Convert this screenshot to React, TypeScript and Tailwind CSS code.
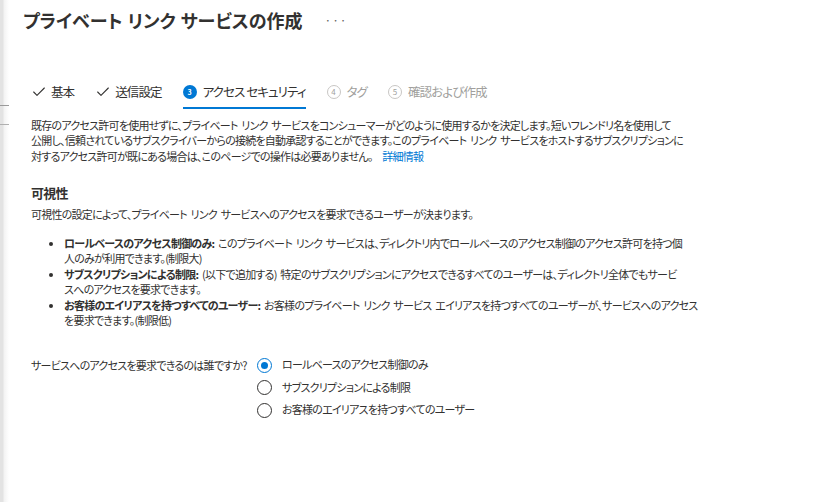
import { Check } from "lucide-react";

const font = "font-['Noto_Sans_CJK_JP','Noto_Sans',sans-serif] [font-feature-settings:'palt']";

function StepDone({ label }: { label: string }) {
  return (
    <div className="flex items-center gap-[4px] pb-[7px] pt-[2px] text-[#323130]">
      <Check size={16} strokeWidth={1.6} className="text-[#323130]" />
      <span>{label}</span>
    </div>
  );
}

function StepTodo({ n, label }: { n: number; label: string }) {
  return (
    <div className="flex items-center gap-[6px] pb-[7px] pt-[2px] text-[#a19f9d]">
      <span className="flex h-[14px] w-[14px] items-center justify-center rounded-full border border-[#c8c6c4] text-[8px] leading-none tracking-normal">
        {n}
      </span>
      <span>{label}</span>
    </div>
  );
}

function Radio({ label, checked }: { label: string; checked?: boolean }) {
  return (
    <label className="flex h-[22.5px] items-center gap-[10px]">
      <span
        className={
          checked
            ? "flex h-[15px] w-[15px] items-center justify-center rounded-full border border-[#0078d4]"
            : "flex h-[15px] w-[15px] items-center justify-center rounded-full border border-[#323130]"
        }
      >
        {checked && <span className="h-[7px] w-[7px] rounded-full bg-[#0078d4]" />}
      </span>
      <span>{label}</span>
    </label>
  );
}

export default function App() {
  return (
    <div className={`flex h-[502px] w-[822px] overflow-hidden bg-white ${font}`}>
      {/* 背後のブレードの端 */}
      <div className="flex w-[9px] shrink-0 flex-col bg-[linear-gradient(to_right,#e3e3e3_3px,#f3f3f3_4px,#ffffff_9px)]">
        <div className="h-[105px]" />
        <div className="h-px bg-[#9a9a9a]" />
        <div className="h-[18px]" />
        <div className="h-px bg-[#b0b0b0]" />
      </div>

      <main className="flex-1 pl-[14px] text-[#323130] [word-spacing:2px]">
        <header className="flex items-center pt-[6px]">
          <h1 className="text-[18px] font-semibold leading-[28px] [word-spacing:1px]">プライベート リンク サービスの作成</h1>
          <span className="ml-[22px] text-[12px] tracking-[1px] text-[#605e5c]">···</span>
        </header>

        <nav className="mt-[47px] flex items-end gap-[21px] pl-[8px] text-[12.5px] tracking-[-0.9px] [word-spacing:0px]">
          <StepDone label="基本" />
          <StepDone label="送信設定" />
          <div className="flex items-center gap-[6px] border-b-2 border-[#0078d4] pb-[5px] pt-[2px]">
            <span className="flex h-[14px] w-[14px] items-center justify-center rounded-full bg-[#0078d4] text-[7px] font-bold leading-none tracking-normal text-white">
              3
            </span>
            <span>アクセス セキュリティ</span>
          </div>
          <StepTodo n={4} label="タグ" />
          <StepTodo n={5} label="確認および作成" />
        </nav>

        <section className="mt-[9px] pl-[8px] text-[11px] leading-[15.5px] tracking-[-0.75px] whitespace-nowrap">
          <p>
            既存のアクセス許可を使用せずに、プライベート リンク サービスをコンシューマーがどのように使用するかを決定します。短いフレンドリ名を使用して
            <br />
            公開し、信頼されているサブスクライバーからの接続を自動承認することができます。このプライベート リンク サービスをホストするサブスクリプションに
            <br />
            対するアクセス許可が既にある場合は、このページでの操作は必要ありません。{" "}
            <a className="ml-[6px] text-[#0078d4]">詳細情報</a>
          </p>

          <h2 className="mt-[19px] text-[13px] font-semibold leading-[20px]">可視性</h2>
          <p className="mt-[4px]">
            可視性の設定によって、プライベート リンク サービスへのアクセスを要求できるユーザーが決まります。
          </p>

          <ul className="mt-[13px] list-disc pl-[33px]">
            <li>
              <b className="font-semibold">ロールベースのアクセス制御のみ:</b> このプライベート リンク サービスは、ディレクトリ内でロールベースのアクセス制御のアクセス許可を持つ個
              <br />
              人のみが利用できます。(制限大)
            </li>
            <li>
              <b className="font-semibold">サブスクリプションによる制限:</b> (以下で追加する) 特定のサブスクリプションにアクセスできるすべてのユーザーは、ディレクトリ全体でもサービ
              <br />
              スへのアクセスを要求できます。
            </li>
            <li>
              <b className="font-semibold">お客様のエイリアスを持つすべてのユーザー:</b> お客様のプライベート リンク サービス エイリアスを持つすべてのユーザーが、サービスへのアクセス
              <br />
              を要求できます。(制限低)
            </li>
          </ul>

          <div className="mt-[25px] flex">
            <div className="w-[226px] pt-[4px]">サービスへのアクセスを要求できるのは誰ですか?</div>
            <div className="flex flex-col">
              <Radio label="ロールベースのアクセス制御のみ" checked />
              <Radio label="サブスクリプションによる制限" />
              <Radio label="お客様のエイリアスを持つすべてのユーザー" />
            </div>
          </div>
        </section>
      </main>
    </div>
  );
}
